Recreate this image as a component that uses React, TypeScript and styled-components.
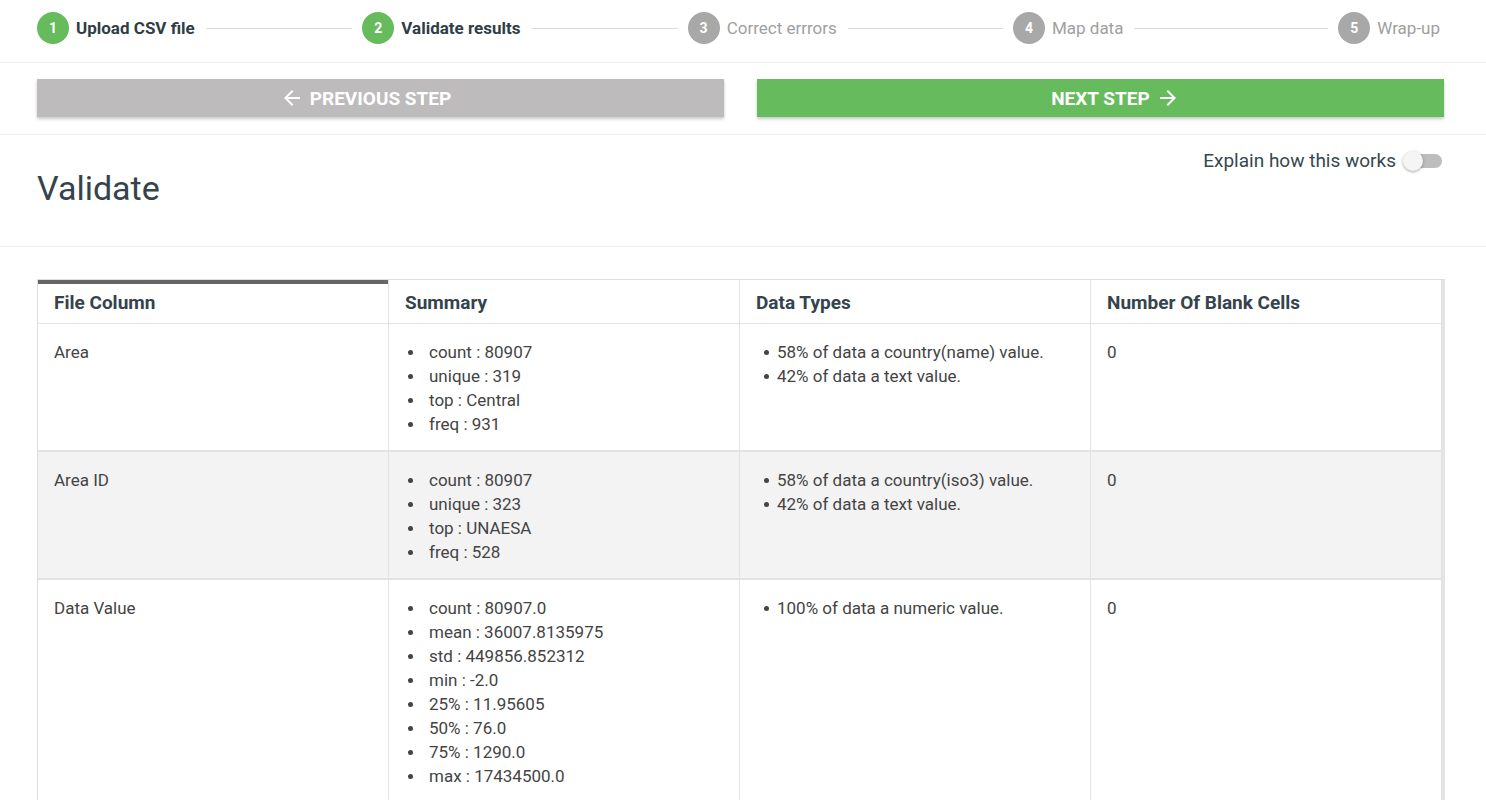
import styled, { createGlobalStyle } from 'styled-components'
import { MdArrowBack, MdArrowForward } from 'react-icons/md'

const GlobalStyle = createGlobalStyle`
  html, body {
    margin: 0;
    padding: 0;
    background: #fff;
    font-family: Roboto, "Liberation Sans", Arial, sans-serif;
  }
`

const Stepper = styled.div`
  display: flex;
  align-items: flex-start;
  height: 63px;
  box-sizing: border-box;
  padding: 12px 46px 0 37px;
  border-bottom: 1px solid #eeeeee;
`

const Step = styled.div<{ $last?: boolean }>`
  display: flex;
  align-items: center;
  flex: ${(p) => (p.$last ? '0 0 auto' : '1 1 0')};
  min-width: 0;
`

const Circle = styled.div<{ $done?: boolean }>`
  width: 32px;
  height: 32px;
  border-radius: 50%;
  flex: none;
  display: flex;
  align-items: center;
  justify-content: center;
  background: ${(p) => (p.$done ? '#66bb5d' : '#a8a8a8')};
  color: #fff;
  font-size: 14px;
  font-weight: 700;
`

const StepLabel = styled.span<{ $done?: boolean }>`
  margin-left: 7px;
  font-size: 17px;
  white-space: nowrap;
  font-weight: ${(p) => (p.$done ? 700 : 400)};
  color: ${(p) => (p.$done ? '#2f3e46' : '#a0a0a0')};
`

const Connector = styled.div`
  flex: 1;
  height: 1px;
  background: #dcdcdc;
  margin: 0 10px 0 11px;
`

const ButtonRow = styled.div`
  display: grid;
  grid-template-columns: 1fr 1fr;
  gap: 33px;
  padding: 16px 42px 17px 37px;
  border-bottom: 1px solid #eeeeee;
`

const NavButton = styled.button<{ $primary?: boolean }>`
  height: 38px;
  border: none;
  border-radius: 0;
  display: flex;
  align-items: center;
  justify-content: center;
  gap: 6px;
  background: ${(p) => (p.$primary ? '#66bb5d' : '#bdbbbb')};
  color: #fff;
  font-family: inherit;
  font-size: 19px;
  font-weight: 700;
  text-transform: uppercase;
  box-shadow: 0 2px 3px rgba(0, 0, 0, 0.22);
  cursor: pointer;

  /* the label is centred; the arrow hangs outside it */
  svg {
    width: 24px;
    height: 24px;
    flex: none;
  }
  svg:first-child {
    margin-left: -30px;
  }
  svg:last-child {
    margin-right: -30px;
  }
`

const TitleSection = styled.div`
  display: flex;
  justify-content: space-between;
  align-items: flex-start;
  height: 112px;
  box-sizing: border-box;
  padding: 0 44px 0 37px;
  border-bottom: 1px solid #eeeeee;
`

const Title = styled.h1`
  margin: 33px 0 0;
  font-size: 34px;
  font-weight: 400;
  line-height: 40px;
  color: #34434c;
`

const ExplainToggle = styled.label`
  display: flex;
  align-items: center;
  gap: 9px;
  margin-top: 15px;
  font-size: 19px;
  line-height: 22px;
  color: #37474f;
`

const Track = styled.span`
  position: relative;
  display: inline-block;
  width: 37px;
  height: 14px;
  border-radius: 7px;
  background: #bdbdbd;
`

const Thumb = styled.span`
  position: absolute;
  left: -2px;
  top: -3px;
  width: 20px;
  height: 20px;
  border-radius: 50%;
  background: #f5f5f5;
  box-shadow: 0 1px 3px rgba(0, 0, 0, 0.35);
`

const TableWrap = styled.div`
  padding: 32px 41px 0 37px;
`

const Table = styled.table`
  width: 100%;
  border-collapse: separate;
  border-spacing: 0;
  table-layout: fixed;
  border: 1px solid #dddddd;
  border-right: 3px solid #e4e4e4;
`

const HeadCell = styled.th<{ $active?: boolean }>`
  text-align: left;
  height: 44px;
  box-sizing: border-box;
  padding: 1px 16px 0;
  font-size: 19px;
  font-weight: 700;
  color: #34434c;
  border-right: 1px solid #e2e2e2;
  border-bottom: 1px solid #e2e2e2;
  box-shadow: ${(p) => (p.$active ? 'inset 0 4px 0 #666666' : 'none')};
`

const Row = styled.tr<{ $shaded?: boolean }>`
  background: ${(p) => (p.$shaded ? '#f3f3f3' : '#fff')};
`

const Cell = styled.td`
  vertical-align: top;
  padding: 16px 16px 14px;
  font-size: 17px;
  line-height: 24px;
  color: #444;
  border-right: 1px solid #e2e2e2;
  border-bottom: 2px solid #e2e2e2;
`

const List = styled.ul`
  margin: 0;
  padding: 0;
  list-style: none;
`

const Item = styled.li<{ $gap: number }>`
  display: flex;
  align-items: center;

  &::before {
    content: '';
    flex: none;
    width: 5px;
    height: 5px;
    border-radius: 50%;
    background: #444;
    margin-left: ${(p) => (p.$gap > 16 ? 3 : 8)}px;
    margin-right: ${(p) => p.$gap - 5}px;
  }
`

type RowData = {
  column: string
  summary: string[]
  types: string[]
  blanks: string
}

const rows: RowData[] = [
  {
    column: 'Area',
    summary: ['count : 80907', 'unique : 319', 'top : Central', 'freq : 931'],
    types: ['58% of data a country(name) value.', '42% of data a text value.'],
    blanks: '0',
  },
  {
    column: 'Area ID',
    summary: ['count : 80907', 'unique : 323', 'top : UNAESA', 'freq : 528'],
    types: ['58% of data a country(iso3) value.', '42% of data a text value.'],
    blanks: '0',
  },
  {
    column: 'Data Value',
    summary: [
      'count : 80907.0',
      'mean : 36007.8135975',
      'std : 449856.852312',
      'min : -2.0',
      '25% : 11.95605',
      '50% : 76.0',
      '75% : 1290.0',
      'max : 17434500.0',
    ],
    types: ['100% of data a numeric value.'],
    blanks: '0',
  },
]

const steps = [
  { n: 1, label: 'Upload CSV file', done: true },
  { n: 2, label: 'Validate results', done: true },
  { n: 3, label: 'Correct errrors', done: false },
  { n: 4, label: 'Map data', done: false },
  { n: 5, label: 'Wrap-up', done: false },
]

export default function App() {
  return (
    <>
      <GlobalStyle />
      <Stepper>
        {steps.map((s, i) => {
          const last = i === steps.length - 1
          return (
            <Step key={s.n} $last={last}>
              <Circle $done={s.done}>{s.n}</Circle>
              <StepLabel $done={s.done}>{s.label}</StepLabel>
              {!last && <Connector />}
            </Step>
          )
        })}
      </Stepper>

      <ButtonRow>
        <NavButton>
          <MdArrowBack />
          <span>Previous step</span>
        </NavButton>
        <NavButton $primary>
          <span>Next step</span>
          <MdArrowForward />
        </NavButton>
      </ButtonRow>

      <TitleSection>
        <Title>Validate</Title>
        <ExplainToggle>
          Explain how this works
          <Track>
            <Thumb />
          </Track>
        </ExplainToggle>
      </TitleSection>

      <TableWrap>
        <Table>
          <thead>
            <tr>
              <HeadCell $active>File Column</HeadCell>
              <HeadCell>Summary</HeadCell>
              <HeadCell>Data Types</HeadCell>
              <HeadCell>Number Of Blank Cells</HeadCell>
            </tr>
          </thead>
          <tbody>
            {rows.map((r, i) => (
              <Row key={r.column} $shaded={i % 2 === 1}>
                <Cell>{r.column}</Cell>
                <Cell>
                  <List>
                    {r.summary.map((s) => (
                      <Item key={s} $gap={21}>{s}</Item>
                    ))}
                  </List>
                </Cell>
                <Cell>
                  <List>
                    {r.types.map((t) => (
                      <Item key={t} $gap={13}>{t}</Item>
                    ))}
                  </List>
                </Cell>
                <Cell>{r.blanks}</Cell>
              </Row>
            ))}
          </tbody>
        </Table>
      </TableWrap>
    </>
  )
}
